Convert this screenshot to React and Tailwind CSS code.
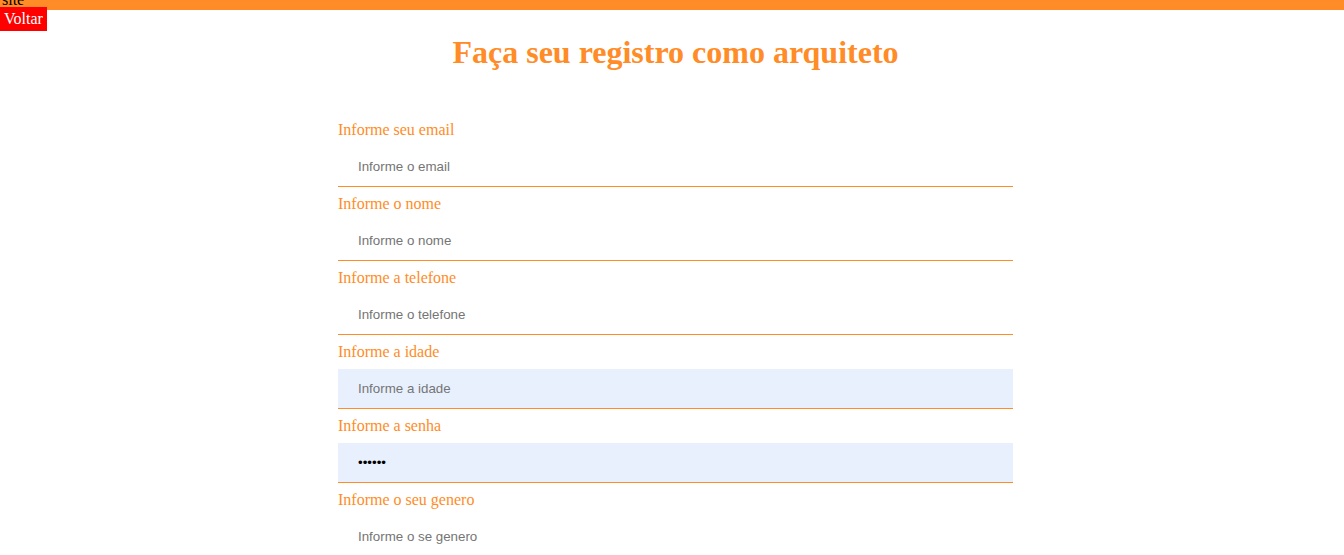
import React from "react";

const fields = [
  { label: "Informe seu email", ph: "Informe o email", type: "text" },
  { label: "Informe o nome", ph: "Informe o nome", type: "text" },
  { label: "Informe a telefone", ph: "Informe o telefone", type: "text" },
  { label: "Informe a idade", ph: "Informe a idade", type: "text", fill: true },
  { label: "Informe a senha", ph: "", type: "password", fill: true, value: "123456" },
  { label: "Informe o seu genero", ph: "Informe o se genero", type: "text" },
];

export default function App() {
  return (
    <div className="flex flex-col w-[1344px] h-[555px] overflow-hidden bg-white" style={{ fontFamily: '"Liberation Serif", serif' }}>
      <div className="flex shrink-0 h-[10px] bg-[#ff8c26]">
        <div className="-mt-[9px] pl-[2px] text-[16px] leading-[18px] text-black">site</div>
      </div>
      <div className="-mt-[3px] flex shrink-0">
        <button className="bg-[#ff0000] text-white text-[16px] leading-[18px] px-[4px] py-[3px]" style={{ fontFamily: '"Liberation Serif", serif' }}>
          Voltar
        </button>
      </div>
      <h1 className="shrink-0 mt-[3px] pl-[7px] text-center text-[32px] leading-[36px] font-bold text-[#ff8c26]">
        Faça seu registro como arquiteto
      </h1>
      <form className="shrink-0 mt-[43px] ml-[338px] w-[675px] flex flex-col">
        {fields.map((f) => (
          <div key={f.label} className="flex flex-col">
            <label className="block py-[8px] text-[16px] leading-[18px] text-[#ff8c26]">{f.label}</label>
            <input
              type={f.type}
              placeholder={f.ph}
              defaultValue={f.value}
              className={`h-[39px] pl-[20px] text-[13.333px] text-black outline-none placeholder:text-[#757575] ${f.fill ? "bg-[#e8f0fe]" : "bg-white"}`}
              style={{ fontFamily: '"Liberation Sans", Arial, sans-serif' }}
            />
            <div className="h-[1px] shrink-0 bg-[#ff8c26]"></div>
          </div>
        ))}
      </form>
    </div>
  );
}
